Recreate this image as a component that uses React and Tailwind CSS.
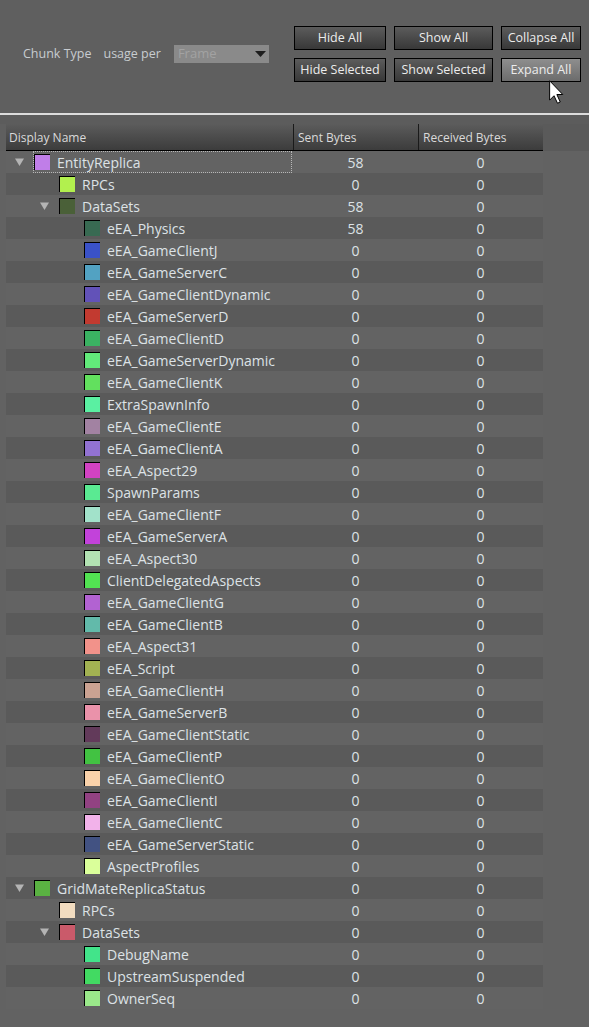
import React from 'react';

const FONT = { fontFamily: '"Open Sans", "Noto Sans", "DejaVu Sans", sans-serif' };

const INDENT = ['pl-[9px]', 'pl-[34px]', 'pl-[59px]'];

const ROWS = [
  { name: 'EntityReplica', color: '#c07ee8', level: 0, arrow: true, sent: 58, focus: true },
  { name: 'RPCs', color: '#b2f04e', level: 1, sent: 0 },
  { name: 'DataSets', color: '#4a6038', level: 1, arrow: true, sent: 58 },
  { name: 'eEA_Physics', color: '#386a52', level: 2, sent: 58 },
  { name: 'eEA_GameClientJ', color: '#3a52c8', level: 2 },
  { name: 'eEA_GameServerC', color: '#52a2c2', level: 2 },
  { name: 'eEA_GameClientDynamic', color: '#6252b8', level: 2 },
  { name: 'eEA_GameServerD', color: '#c23a30', level: 2 },
  { name: 'eEA_GameClientD', color: '#3ab262', level: 2 },
  { name: 'eEA_GameServerDynamic', color: '#62ea7a', level: 2 },
  { name: 'eEA_GameClientK', color: '#62e05e', level: 2 },
  { name: 'ExtraSpawnInfo', color: '#5af0a2', level: 2 },
  { name: 'eEA_GameClientE', color: '#a282a2', level: 2 },
  { name: 'eEA_GameClientA', color: '#9272d2', level: 2 },
  { name: 'eEA_Aspect29', color: '#d242c2', level: 2 },
  { name: 'SpawnParams', color: '#5aea92', level: 2 },
  { name: 'eEA_GameClientF', color: '#a2e2ca', level: 2 },
  { name: 'eEA_GameServerA', color: '#c242da', level: 2 },
  { name: 'eEA_Aspect30', color: '#b2e2b2', level: 2 },
  { name: 'ClientDelegatedAspects', color: '#52e252', level: 2 },
  { name: 'eEA_GameClientG', color: '#b262d2', level: 2 },
  { name: 'eEA_GameClientB', color: '#62baaa', level: 2 },
  { name: 'eEA_Aspect31', color: '#f2928a', level: 2 },
  { name: 'eEA_Script', color: '#a2b252', level: 2 },
  { name: 'eEA_GameClientH', color: '#caa292', level: 2 },
  { name: 'eEA_GameServerB', color: '#ea92aa', level: 2 },
  { name: 'eEA_GameClientStatic', color: '#623a5a', level: 2 },
  { name: 'eEA_GameClientP', color: '#42c242', level: 2 },
  { name: 'eEA_GameClientO', color: '#fad2aa', level: 2 },
  { name: 'eEA_GameClientI', color: '#924282', level: 2 },
  { name: 'eEA_GameClientC', color: '#f2b2ea', level: 2 },
  { name: 'eEA_GameServerStatic', color: '#425282', level: 2 },
  { name: 'AspectProfiles', color: '#daff9a', level: 2 },
  { name: 'GridMateReplicaStatus', color: '#5ab242', level: 0, arrow: true },
  { name: 'RPCs', color: '#f2dcc0', level: 1 },
  { name: 'DataSets', color: '#ca5a6a', level: 1, arrow: true },
  { name: 'DebugName', color: '#42e48a', level: 2 },
  { name: 'UpstreamSuspended', color: '#42da62', level: 2 },
  { name: 'OwnerSeq', color: '#9ae88a', level: 2 },
];

const Arrow = () => (
  <svg width="9" height="8" viewBox="0 0 9 8">
    <polygon points="0,0.5 9,0.5 4.5,8" fill="#b4b4b4" />
  </svg>
);

const Button = ({ label, hover }) => (
  <button
    className={`h-[24px] border border-black text-[12.5px] text-[#ececec] ${
      hover
        ? 'bg-gradient-to-b from-[#8e8e8e] to-[#6c6c6c]'
        : 'bg-gradient-to-b from-[#5c5c5c] to-[#383838]'
    }`}
  >
    {label}
  </button>
);

const Row = ({ row, idx }) => (
  <div
    className={`relative flex h-[22px] w-[537px] ml-[6px] text-[14px] text-[#dde2e6] ${
      idx % 2 === 0 ? 'bg-[#636363]' : 'bg-[#5a5a5a]'
    }`}
  >
    <div className={`flex items-center w-[287px] ${INDENT[row.level]}`}>
      <div className="w-[9px] mr-[10px] flex items-center">{row.arrow && <Arrow />}</div>
      <div
        className="w-[16px] h-[16px] border-l border-t border-black shrink-0"
        style={{ backgroundColor: row.color }}
      />
      <span className="ml-[7px] pt-[1px] whitespace-nowrap">{row.name}</span>
    </div>
    <div className="w-[125px] pt-[1px] flex items-center justify-center">{row.sent ?? 0}</div>
    <div className="w-[125px] pt-[1px] flex items-center justify-center">0</div>
    {row.focus && (
      <div className="absolute left-[27px] top-0 w-[259px] h-[22px] border border-dotted border-[#b8b8b8]" />
    )}
  </div>
);

const App = () => {
  return (
    <div className="relative w-[589px] h-[1027px] overflow-hidden bg-[#626262]" style={FONT}>
      <div className="h-[113px] flex bg-[#5f5f5f]">
        <div className="flex items-center h-[18px] mt-[45px] ml-[23px] text-[12.5px] text-[#c8ccd0]">
          <span>Chunk Type</span>
          <span className="ml-[12px]">usage per</span>
          <div className="ml-[13px] w-[95px] h-[18px] bg-[#8a8a8a] flex items-center justify-between pl-[4px] pr-[3px]">
            <span className="text-[13px] text-[#a2a2a2]">Frame</span>
            <svg width="11" height="7" viewBox="0 0 11 7">
              <polygon points="0,0 11,0 5.5,6" fill="#1e1e1e" />
            </svg>
          </div>
        </div>
        <div className="ml-auto mr-[8px] mt-[26px] grid grid-cols-[92px_99px_80px] gap-[8px] self-start">
          <Button label="Hide All" />
          <Button label="Show All" />
          <Button label="Collapse All" />
          <Button label="Hide Selected" />
          <Button label="Show Selected" />
          <Button label="Expand All" hover />
        </div>
      </div>
      <div className="h-[2px] bg-[#dcdcdc]" />
      <div className="h-[9px] bg-[#5c5c5c]" />

      <div className="flex h-[27px]">
        <div className="w-[6px] bg-[#5f5f5f]" />
        <div className="flex w-[537px] border-b border-black bg-gradient-to-b from-[#5c5c5c] to-[#3c3c3c] text-[12px] text-[#dadada]">
          <div className="w-[287px] pl-[3px] pt-[1px] flex items-center">Display Name</div>
          <div className="w-[125px] pl-[4px] pt-[1px] flex items-center border-l border-[#1a1a1a]">Sent Bytes</div>
          <div className="w-[125px] pl-[4px] pt-[1px] flex items-center border-l border-[#1a1a1a]">Received Bytes</div>
        </div>
        <div className="flex-1 bg-[#5a5a5a]" />
      </div>

      {ROWS.map((row, i) => (
        <Row key={i} row={row} idx={i} />
      ))}

      <svg className="absolute left-[549px] top-[80px]" width="15" height="24" viewBox="0 0 12 19">
        <path d="M0.5,0.5 L0.5,16 L4,12.5 L6.8,18.5 L9,17.5 L6.3,11.5 L11,11.5 Z" fill="#fff" stroke="#000" strokeWidth="0.8" />
      </svg>
    </div>
  );
};

export default App;
